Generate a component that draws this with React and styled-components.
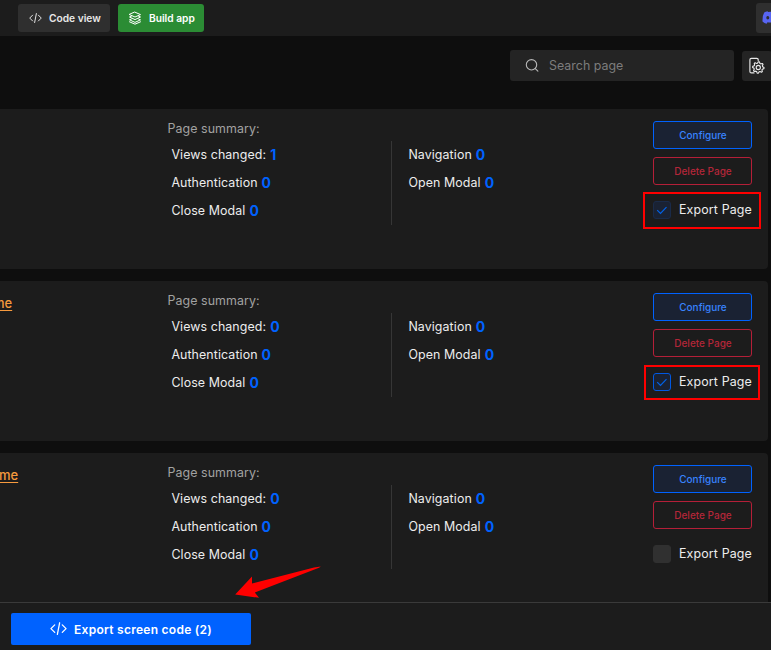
import React from "react";
import styled, { createGlobalStyle } from "styled-components";

const GlobalStyle = createGlobalStyle`
  * { box-sizing: border-box; }
  body { margin: 0; background: #0e0e0e; font-family: Inter, sans-serif; overflow: hidden; }
  button { font-family: inherit; padding: 0; }
`;

const Screen = styled.div`
  position: relative;
  display: flex;
  flex-direction: column;
  width: 771px;
  height: 650px;
  overflow: hidden;
  color: #ededed;
`;

const Header = styled.header`
  display: flex;
  align-items: center;
  gap: 8px;
  flex: 0 0 36px;
  padding-left: 18px;
  background: #1c1c1c;
`;

const HeaderButton = styled.button`
  display: flex;
  align-items: center;
  gap: 7px;
  width: ${(p) => p.$width}px;
  height: 28px;
  padding-left: ${(p) => (p.$primary ? 10 : 11)}px;
  border: 0;
  border-radius: 3px;
  background: ${(p) => (p.$primary ? "#2b8c34" : "#2f2f2f")};
  color: ${(p) => (p.$primary ? "#fff" : "#e8e8e8")};
  font-size: 10.2px;
  font-weight: 600;
  white-space: nowrap;
`;

const DiscordButton = styled.button`
  display: flex;
  align-items: center;
  flex: 0 0 30px;
  height: 30px;
  margin-left: auto;
  margin-right: -15px;
  padding-left: 6px;
  border: 0;
  border-radius: 3px;
  background: #2f2f2f;
`;

const Toolbar = styled.div`
  display: flex;
  justify-content: flex-end;
  align-items: flex-end;
  gap: 8px;
  flex: 0 0 45px;
  margin-right: -1px;
`;

const SearchField = styled.label`
  display: flex;
  align-items: center;
  gap: 9px;
  width: 224px;
  height: 31px;
  padding-left: 15px;
  border-radius: 3px;
  background: #242424;
  color: #b8b8b8;
`;

const SearchInput = styled.input`
  width: 160px;
  padding: 0;
  border: 0;
  outline: 0;
  background: transparent;
  font: 400 12.4px Inter, sans-serif;
  letter-spacing: 0.02px;
  &::placeholder { color: #7c7c7c; opacity: 1; }
`;

const SettingsButton = styled.button`
  display: flex;
  align-items: center;
  width: 30px;
  height: 30px;
  padding-left: 6px;
  border: 0;
  border-radius: 3px;
  background: #242424;
  color: #e8e8e8;
`;

const CardList = styled.main`
  display: flex;
  flex-direction: column;
  gap: 12px;
  flex: 1;
  min-height: 0;
  padding: 28px 3px 0 0;
  overflow: hidden;
`;

const Card = styled.article`
  display: grid;
  grid-template-columns: 167px 224px 262px 99px;
  flex: 0 0 160px;
  padding-top: 12px;
  border-radius: 0 4px 4px 0;
  background: #1c1c1c;
`;

const PageLink = styled.a`
  display: block;
  margin-left: ${(p) => p.$shift}px;
  margin-top: -1px;
  color: #f79a3e;
  font-size: 13px;
  font-weight: 500;
  line-height: 22px;
  text-decoration: underline;
  text-underline-offset: 2px;
`;

const Summary = styled.section`
  font-size: 12.4px;
  line-height: 16px;
`;

const SummaryTitle = styled.div`
  padding-left: 0.5px;
  color: #a2a2a2;
  letter-spacing: 0.08px;
`;

const Stats = styled.div`
  height: 84px;
  margin-top: 4px;
  padding-left: ${(p) => (p.$divided ? 16.4 : 4.4)}px;
  border-left: ${(p) => (p.$divided ? "1px solid #363636" : "0")};
`;

const Stat = styled.div`
  display: flex;
  align-items: center;
  gap: 4px;
  height: 28px;
  font-size: 12.4px;
  letter-spacing: 0.1px;
  white-space: nowrap;
`;

const Count = styled.strong`
  color: #0062ff;
  font-size: 14px;
  font-weight: 700;
  letter-spacing: 0;
`;

const Actions = styled.div`
  display: flex;
  flex-direction: column;
  gap: 8px;
`;

const ActionButton = styled.button`
  height: 28px;
  padding-left: 1px;
  border: 1px solid ${(p) => (p.$danger ? "#b51f38" : "#0062ff")};
  border-radius: 3px;
  background: ${(p) => (p.$danger ? "transparent" : "#1a2233")};
  color: ${(p) => (p.$danger ? "#b32639" : "#3883ff")};
  font-size: 10px;
  font-weight: 500;
`;

const ExportOption = styled.label`
  position: relative;
  display: flex;
  align-items: center;
  gap: 8px;
  height: 18px;
  margin-top: 8px;
  font-size: 12.4px;
  letter-spacing: 0.15px;
  white-space: nowrap;
`;

const ExportLabel = styled.span`
  padding-bottom: 1px;
`;

const CheckBox = styled.span`
  display: grid;
  place-items: center;
  flex: 0 0 18px;
  height: 18px;
  border: 1px solid ${(p) => ({ focus: "#0058e2", on: "#1a2b49", off: "#303030" })[p.$state]};
  border-radius: 3px;
  background: ${(p) => (p.$state === "off" ? "#303030" : "#1a2233")};
`;

const Highlight = styled.span`
  position: absolute;
  top: ${(p) => p.$top}px;
  left: ${(p) => p.$left}px;
  width: ${(p) => p.$width}px;
  height: ${(p) => p.$height}px;
  border: 2px solid #f00;
`;

const Footer = styled.footer`
  flex: 0 0 48px;
  padding: 10px 11px 0;
  border-top: 1px solid #3a3a3a;
  background: #1c1c1c;
`;

const ExportButton = styled.button`
  display: flex;
  align-items: center;
  gap: 7px;
  width: 240px;
  height: 32px;
  padding-left: 39px;
  border: 0;
  border-radius: 2px;
  background: #0062ff;
  color: #fff;
  font-size: 12px;
  font-weight: 600;
  letter-spacing: 0.27px;
`;

const ArrowMark = styled.svg`
  position: absolute;
  left: 234px;
  top: 565px;
`;

const CodeIcon = ({ width = 14 }) => (
  <svg width={width} height={(width * 14) / 18} viewBox="0 0 18 14" fill="none" stroke="currentColor" strokeWidth="1.35" strokeLinecap="round" strokeLinejoin="round">
    <path d="M5 3 1 7l4 4M13 3l4 4-4 4M10.2 .8 7.8 13.2" />
  </svg>
);

const LayersIcon = () => (
  <svg width="14" height="14" viewBox="0 0 14 14" fill="none" stroke="currentColor" strokeWidth="1" strokeLinejoin="round" strokeLinecap="round">
    <path d="m7 1.2 5.5 2.4L7 6 1.5 3.6ZM3.4 5.2 1.5 6 7 8.6 12.5 6l-1.9-.8M3.4 8 1.5 8.8 7 11.4l5.5-2.6-1.9-.8M1.5 10.8 7 13.2l5.5-2.4" />
  </svg>
);

const SearchIcon = () => (
  <svg width="15" height="15" viewBox="0 0 15 15" fill="none" stroke="currentColor" strokeWidth="1.1" strokeLinecap="round">
    <circle cx="6.5" cy="6.8" r="5.2" />
    <path d="m10.3 10.6 2.6 2.6" />
  </svg>
);

const gearPath = Array.from({ length: 32 }, (_, i) => {
  const angle = (i / 32) * Math.PI * 2;
  const radius = i % 4 < 2 ? 5.7 : 4.4;
  return `${i ? "L" : "M"}${(10.3 + radius * Math.cos(angle)).toFixed(2)} ${(10.5 + radius * Math.sin(angle)).toFixed(2)}`;
}).join("") + "Z";

const PageSettingsIcon = () => (
  <svg width="18" height="18" viewBox="0 0 18 18" fill="none" stroke="currentColor" strokeWidth="1.15" strokeLinejoin="round" strokeLinecap="round">
    <path d="M10.2 3.5V2.8q0-1.5-1.5-1.5H3.4q-1.5 0-1.5 1.5v11.6q0 1.5 1.5 1.5H6" />
    <path d={gearPath} />
    <circle cx="10.3" cy="10.5" r="2.1" />
  </svg>
);

const DiscordIcon = () => (
  <svg width="17" height="14" viewBox="0 0 17 14" fill="#5865f2" fillRule="evenodd">
    <path d="M6 1 5.6.3Q3.6.6 2.2 1.5.3 4.5.5 10.5q1.8 1.7 4.1 2.2l.9-1.5q3 .7 6 0l.9 1.5q2.3-.5 4.1-2.2.2-6-1.7-9Q13.4.6 11.4.3L11 1Q8.5.7 6 1ZM5.8 5q1.5 0 1.5 1.7T5.8 8.5Q4.3 8.5 4.3 6.7T5.8 5Zm5.4 0q1.5 0 1.5 1.7t-1.5 1.8q-1.5 0-1.5-1.8T11.2 5Z" />
  </svg>
);

const CheckIcon = () => (
  <svg width="12" height="9" viewBox="0 0 12 9" fill="none" stroke="#0062e8" strokeWidth="1.2">
    <path d="m1.2 4.1 3.3 3.3 6-6.2" />
  </svg>
);

const pages = [
  { views: 1, state: "on", mark: { $left: -10, $top: -9, $width: 118, $height: 37 } },
  { name: "me", shift: -7, views: 0, state: "focus", mark: { $left: -9, $top: -8, $width: 116, $height: 35 } },
  { name: "me", shift: -1, views: 0, state: "off" },
];

const StatLine = ({ label, value }) => (
  <Stat>
    <span>{label}</span>
    <Count>{value}</Count>
  </Stat>
);

const PageCard = ({ page }) => (
  <Card>
    <div>{page.name && <PageLink $shift={page.shift}>{page.name}</PageLink>}</div>
    <Summary>
      <SummaryTitle>Page summary:</SummaryTitle>
      <Stats>
        <StatLine label="Views changed:" value={page.views} />
        <StatLine label="Authentication" value={0} />
        <StatLine label="Close Modal" value={0} />
      </Stats>
    </Summary>
    <Summary>
      <SummaryTitle>&nbsp;</SummaryTitle>
      <Stats $divided>
        <StatLine label="Navigation" value={0} />
        <StatLine label="Open Modal" value={0} />
      </Stats>
    </Summary>
    <Actions>
      <ActionButton>Configure</ActionButton>
      <ActionButton $danger>Delete Page</ActionButton>
      <ExportOption>
        <CheckBox $state={page.state}>{page.state !== "off" && <CheckIcon />}</CheckBox>
        <ExportLabel>Export Page</ExportLabel>
        {page.mark && <Highlight {...page.mark} />}
      </ExportOption>
    </Actions>
  </Card>
);

export default function App() {
  return (
    <Screen>
      <GlobalStyle />
      <Header>
        <HeaderButton $width={92}><CodeIcon width={13} />Code view</HeaderButton>
        <HeaderButton $width={86} $primary><LayersIcon />Build app</HeaderButton>
        <DiscordButton aria-label="Discord"><DiscordIcon /></DiscordButton>
      </Header>
      <Toolbar>
        <SearchField>
          <SearchIcon />
          <SearchInput placeholder="Search page" />
        </SearchField>
        <SettingsButton aria-label="Page settings"><PageSettingsIcon /></SettingsButton>
      </Toolbar>
      <CardList>
        {pages.map((page, i) => <PageCard key={i} page={page} />)}
      </CardList>
      <Footer>
        <ExportButton><CodeIcon width={17} />Export screen code (2)</ExportButton>
      </Footer>
      <ArrowMark width="88" height="36" viewBox="0 0 88 36" fill="#f00">
        <path d="M86.8 1.5 85 2.8 20.8 27.6 25 32.8 1.2 29.5 18 11.5V18.6L80 2.6Z" />
      </ArrowMark>
    </Screen>
  );
}
